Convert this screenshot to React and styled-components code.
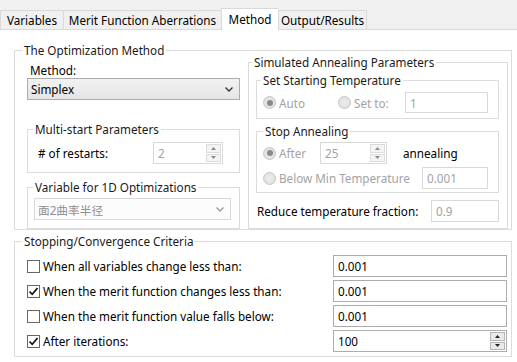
import styled, { createGlobalStyle } from "styled-components"

const GlobalStyle = createGlobalStyle`
  body {
    margin: 0;
    background: #fff;
    font-family: "Noto Sans", "Noto Sans CJK SC", sans-serif;
    font-size: 11.7px;
    color: #000;
  }
`

const Page = styled.div`
  width: 517px;
  height: 362px;
  overflow: hidden;
  background: #fff;
`

const TabBar = styled.div`
  display: flex;
  align-items: flex-end;
  height: 30px;
  box-sizing: border-box;
  background: #f0f0f0;
  border-bottom: 1px solid #d9d9d9;
`

const Tab = styled.div`
  box-sizing: border-box;
  width: ${p => p.$w}px;
  height: ${p => (p.$active ? 22 : 19)}px;
  margin-bottom: ${p => (p.$active ? -1 : 0)}px;
  padding-bottom: ${p => (p.$active ? 2 : 0)}px;
  display: flex;
  align-items: center;
  justify-content: center;
  background: ${p => (p.$active ? "#fff" : "#f0f0f0")};
  border-left: 1px solid #d9d9d9;
  border-top: 1px solid #d9d9d9;
  border-right: ${p => (p.$last ? "1px solid #d9d9d9" : "none")};
  white-space: nowrap;
`

const Content = styled.div`
  padding: 14px 0 0 14px;
`

const Group = styled.fieldset`
  margin: ${p => p.$mt || 0}px 0 0 0;
  padding: 0;
  min-width: 0;
  box-sizing: border-box;
  width: ${p => (p.$w ? `${p.$w}px` : "auto")};
  border: 1px solid #dcdcdc;
`

const Legend = styled.legend`
  padding: 0 2px;
  margin-left: ${p => (p.$indent != null ? p.$indent : 7)}px;
  line-height: 12px;
  font-size: 11.7px;
  color: #1a1a1a;
  white-space: nowrap;
`

const GroupBody = styled.div`
  padding: ${p => p.$pad};
`

const Columns = styled.div`
  display: grid;
  grid-template-columns: 213px 260px;
  column-gap: 8px;
  align-items: start;
  padding: 0 3px 0 12px;
`

const Column = styled.div`
  display: flex;
  flex-direction: column;
`

const FieldLabel = styled.div`
  margin-top: ${p => p.$mt || 0}px;
  padding-left: ${p => p.$pl || 0}px;
  line-height: 16px;
  width: ${p => (p.$w ? `${p.$w}px` : "auto")};
  flex-shrink: 0;
  color: ${p => (p.$disabled ? "#a3a3a3" : "#000")};
  white-space: nowrap;
`

const Select = styled.div`
  height: 22px;
  box-sizing: border-box;
  width: ${p => (p.$w ? `${p.$w}px` : "auto")};
  border: 1px solid ${p => (p.$disabled ? "#d9d9d9" : "#acacac")};
  background: ${p => (p.$disabled ? "#fcfcfc" : "linear-gradient(#f2f2f2, #e5e5e5)")};
  color: ${p => (p.$disabled ? "#8f8f8f" : "#000")};
  display: flex;
  align-items: center;
  justify-content: space-between;
  padding: 0 6px 0 3px;
  white-space: nowrap;
`

const Row = styled.div`
  display: flex;
  align-items: center;
  height: ${p => p.$h || 22}px;
  margin-top: ${p => p.$mt || 0}px;
  justify-content: ${p => p.$justify || "flex-start"};
`

const Field = styled.div`
  box-sizing: border-box;
  height: ${p => p.$h || 22}px;
  width: ${p => p.$w}px;
  flex-shrink: 0;
  border: 1px solid ${p => (p.$disabled ? "#d9d9d9" : "#acacac")};
  background: #fff;
  color: ${p => (p.$disabled ? "#a3a3a3" : "#000")};
  display: flex;
  align-items: center;
  padding-left: 4px;
  margin-left: ${p => p.$ml || 0}px;
  position: relative;
`

const Spinner = styled.div`
  position: absolute;
  top: 1px;
  right: 1px;
  bottom: 1px;
  width: 15px;
  display: flex;
  flex-direction: column;
  gap: 1px;
`

const SpinButton = styled.div`
  flex: 1;
  box-sizing: border-box;
  border: 1px solid ${p => (p.$disabled ? "#dcdcdc" : "#b5b5b5")};
  background: ${p => (p.$disabled ? "#f4f4f4" : "#eaeaea")};
  display: flex;
  align-items: center;
  justify-content: center;
`

const RadioItem = styled.div`
  display: flex;
  align-items: center;
  width: ${p => p.$w}px;
  flex-shrink: 0;
  color: #a3a3a3;
  white-space: nowrap;
`

const RadioDot = styled.span`
  width: 13px;
  height: 13px;
  box-sizing: border-box;
  border-radius: 50%;
  border: 1px solid #c4c4c4;
  background: radial-gradient(circle, #ececec, #dedede);
  margin-right: 3px;
  display: flex;
  align-items: center;
  justify-content: center;
  flex-shrink: 0;
  &::after {
    content: "";
    width: 6px;
    height: 6px;
    border-radius: 50%;
    background: ${p => (p.$on ? "#8a8a8a" : "transparent")};
  }
`

const CheckBox = styled.span`
  width: 13px;
  height: 13px;
  box-sizing: border-box;
  border: 1px solid #666;
  background: #fff;
  display: flex;
  align-items: center;
  justify-content: center;
  flex-shrink: 0;
  margin-right: 3px;
`

const CriteriaLabel = styled.div`
  flex: 1;
  display: flex;
  align-items: center;
  white-space: nowrap;
`

const Chevron = ({ color = "#333" }) => (
  <svg width="8" height="5" viewBox="0 0 8 5">
    <polyline points="0.5,0.5 4,4 7.5,0.5" fill="none" stroke={color} strokeWidth="1.3" />
  </svg>
)

const Arrow = ({ up, color }) => (
  <svg width="5" height="3" viewBox="0 0 5 3">
    <polygon points={up ? "0,3 5,3 2.5,0" : "0,0 5,0 2.5,3"} fill={color} />
  </svg>
)

const SpinField = ({ value, w, disabled, ml }) => {
  const c = disabled ? "#8a8a8a" : "#222"
  return (
    <Field $w={w} $disabled={disabled} $ml={ml}>
      {value}
      <Spinner>
        <SpinButton $disabled={disabled}>
          <Arrow up color={c} />
        </SpinButton>
        <SpinButton $disabled={disabled}>
          <Arrow color={c} />
        </SpinButton>
      </Spinner>
    </Field>
  )
}

const Tick = () => (
  <svg width="11" height="11" viewBox="0 0 11 11">
    <polyline points="1.5,5.5 4.2,8.3 9.5,2" fill="none" stroke="#111" strokeWidth="1.7" />
  </svg>
)

const criteria = [
  { label: "When all variables change less than:", checked: false, value: "0.001" },
  { label: "When the merit function changes less than:", checked: true, value: "0.001" },
  { label: "When the merit function value falls below:", checked: false, value: "0.001" },
  { label: "After iterations:", checked: true, value: "100", spin: true },
]

const App = () => {
  return (
    <Page>
      <GlobalStyle />
      <TabBar>
        <Tab $w={63}>Variables</Tab>
        <Tab $w={158}>Merit Function Aberrations</Tab>
        <Tab $w={57} $active>Method</Tab>
        <Tab $w={89} $last>Output/Results</Tab>
      </TabBar>
      <Content>
        <Group $w={498}>
          <Legend>The Optimization Method</Legend>
          <Columns>
            <Column>
              <FieldLabel $mt={6} $pl={3}>Method:</FieldLabel>
              <Select>
                Simplex
                <Chevron />
              </Select>
              <Group $mt={23}>
                <Legend $indent={5}>Multi-start Parameters</Legend>
                <GroupBody $pad="7px 0 8px 10px">
                  <Row>
                    <FieldLabel $w={115}># of restarts:</FieldLabel>
                    <SpinField value="2" w={70} disabled />
                  </Row>
                </GroupBody>
              </Group>
              <Group $mt={8}>
                <Legend $indent={5}>Variable for 1D Optimizations</Legend>
                <GroupBody $pad="5px 0 8px 6px">
                  <Select $w={197} $disabled>
                    面2曲率半径
                    <Chevron color="#9a9a9a" />
                  </Select>
                </GroupBody>
              </Group>
            </Column>
            <Column>
              <Group>
                <Legend $indent={3}>Simulated Annealing Parameters</Legend>
                <GroupBody $pad="6px 8px 6px 7px">
                  <Group>
                    <Legend $indent={4}>Set Starting Temperature</Legend>
                    <GroupBody $pad="6px 0 5px 6px">
                      <Row $h={21}>
                        <RadioItem $w={75}>
                          <RadioDot $on />
                          Auto
                        </RadioItem>
                        <RadioItem $w={67}>
                          <RadioDot />
                          Set to:
                        </RadioItem>
                        <Field $w={83} $h={21} $disabled>1</Field>
                      </Row>
                    </GroupBody>
                  </Group>
                  <Group $mt={6}>
                    <Legend $indent={6}>Stop Annealing</Legend>
                    <GroupBody $pad="5px 0 3px 6px">
                      <Row>
                        <RadioItem $w={57}>
                          <RadioDot $on />
                          After
                        </RadioItem>
                        <SpinField value="25" w={67} disabled />
                        <FieldLabel $pl={16}>annealing</FieldLabel>
                      </Row>
                      <Row $mt={3}>
                        <RadioItem $w={159}>
                          <RadioDot />
                          Below Min Temperature
                        </RadioItem>
                        <Field $w={66} $disabled>0.001</Field>
                      </Row>
                    </GroupBody>
                  </Group>
                  <Row $mt={7} $justify="space-between">
                    <FieldLabel $pl={1}>Reduce temperature fraction:</FieldLabel>
                    <Field $w={68} $disabled>0.9</Field>
                  </Row>
                </GroupBody>
              </Group>
            </Column>
          </Columns>
        </Group>
        <Group $w={498} $mt={5}>
          <Legend>Stopping/Convergence Criteria</Legend>
          <GroupBody $pad="8px 4px 4px 12px">
            {criteria.map((c, i) => (
              <Row key={c.label} $mt={i ? 3 : 0}>
                <CriteriaLabel>
                  <CheckBox>{c.checked && <Tick />}</CheckBox>
                  {c.label}
                </CriteriaLabel>
                {c.spin ? (
                  <SpinField value={c.value} w={174} />
                ) : (
                  <Field $w={174}>{c.value}</Field>
                )}
              </Row>
            ))}
          </GroupBody>
        </Group>
      </Content>
    </Page>
  )
}

export default App
